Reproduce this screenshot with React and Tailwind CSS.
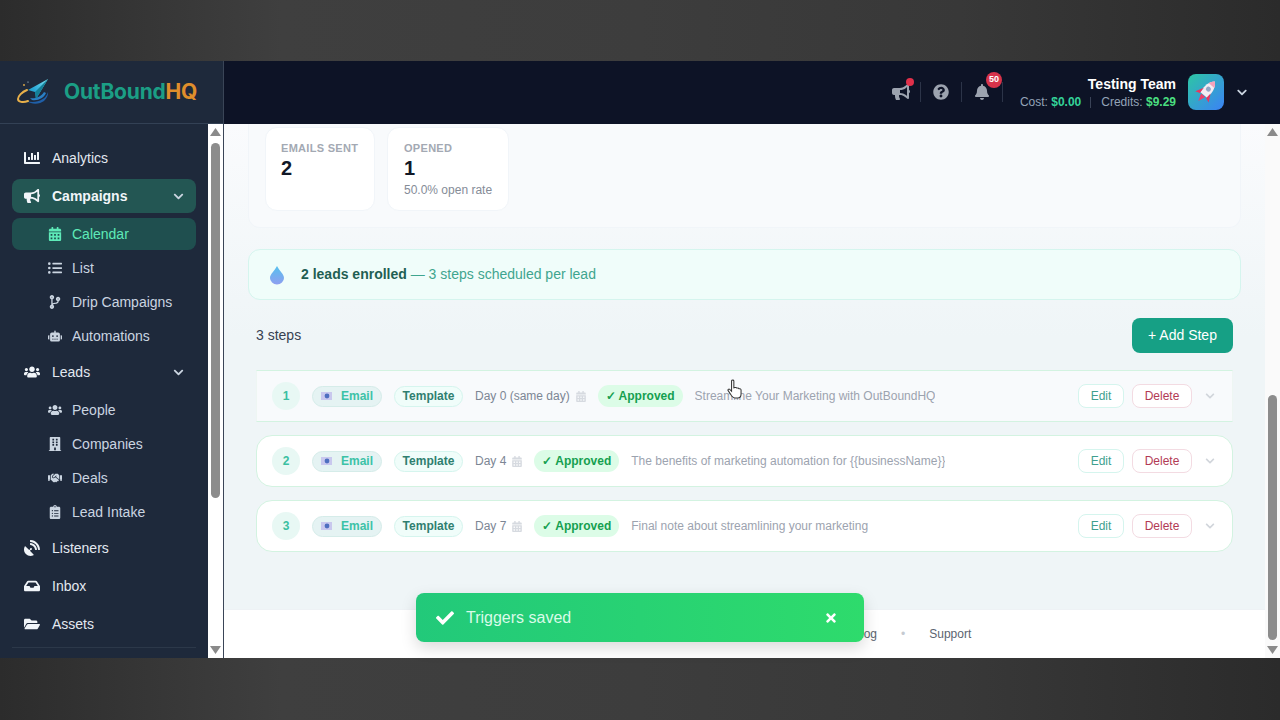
import React from "react";
import {
  FaChartBar, FaBullhorn, FaCalendarAlt, FaListUl, FaCodeBranch, FaRobot, FaUsers, FaBuilding,
  FaHandshake, FaClipboardList, FaSatelliteDish, FaInbox, FaFolderOpen, FaQuestionCircle, FaBell,
  FaCheck, FaTimes, FaChevronDown,
} from "react-icons/fa";

function Main({ icon: Icon, label, active, chevron }) {
  return (
    <div className={`flex h-[34px] items-center rounded-lg pl-3 pr-3 ${active ? "bg-[#235653] font-bold text-[#f1f5f9]" : "text-[#e2e8f0]"}`}>
      <Icon className="h-4 w-4 shrink-0 text-[#f1f5f9]" />
      <span className="ml-3 text-[14px]">{label}</span>
      {chevron && <FaChevronDown className="ml-auto h-[11px] w-[11px] text-[#cbd5e1]" />}
    </div>
  );
}

function Sub({ icon: Icon, label, active }) {
  return (
    <div className={`flex h-[32px] items-center rounded-lg pl-9 ${active ? "bg-[#1f4f4f] text-[#5eeab8]" : "text-[#cbd5e1]"}`}>
      <span className="flex w-[14px] justify-center"><Icon className="h-[14px] w-[14px]" /></span>
      <span className="ml-[10px] text-[14px]">{label}</span>
    </div>
  );
}

function Arrow({ down }) {
  return (
    <svg width="11" height="8" viewBox="0 0 11 8" className="shrink-0">
      <path d={down ? "M0 0h11L5.5 8z" : "M0 8h11L5.5 0z"} fill="#8a8a8a" />
    </svg>
  );
}

function Scrollbar({ before, thumb, bg }) {
  return (
    <div className={`flex w-[15px] shrink-0 flex-col items-center py-1 ${bg}`}>
      <Arrow />
      <div className="shrink-0" style={{ height: before }} />
      <div className="w-[9px] shrink-0 rounded-full bg-[#8c8c8c]" style={{ height: thumb }} />
      <div className="flex-1" />
      <Arrow down />
    </div>
  );
}

function Logo() {
  return (
    <svg width="32" height="26" viewBox="0 0 32 26" className="shrink-0">
      <defs>
        <linearGradient id="plane" x1="1" y1="0" x2="0" y2="1">
          <stop offset="0" stopColor="#7fe3f0" />
          <stop offset="0.6" stopColor="#2aa9d8" />
          <stop offset="1" stopColor="#1c8fa8" />
        </linearGradient>
      </defs>
      <path d="M10 22c8 3 19-1 21-9 .4 3-1 6-4 9-4 3-12 4-17 0z" fill="#1f5fa8" />
      <path d="M13 19c5 1 11-1 14-6l2 1c-2 5-8 8-14 7z" fill="#2a7fc4" />
      <path d="M10 11C5 13 1 17 1 20c0 3 5 4 10 2" fill="none" stroke="#e8b04a" strokeWidth="2" strokeLinecap="round" />
      <path d="M31 0 11 11l7 2 1 7z" fill="url(#plane)" />
      <path d="M31 0 18 13l1 7z" fill="#147f96" />
      <circle cx="7" cy="6" r="0.900" fill="#e8b04a" />
      <circle cx="11" cy="3" r="0.600" fill="#cfe8f5" />
    </svg>
  );
}

function Rocket() {
  return (
    <svg width="30" height="30" viewBox="0 0 24 24">
      <g transform="rotate(40 12 12)">
        <path d="M12 1c3.500 3 4.500 8 3.500 14h-7C7.500 9 8.500 4 12 1z" fill="#f3ecf3" />
        <path d="M12 1c1.400 1.200 2.400 2.600 3 4.200H9C9.600 3.600 10.600 2.200 12 1z" fill="#f4a3bb" />
        <circle cx="12" cy="9" r="2" fill="#93a5c6" />
        <path d="M8.500 10.500 5 17l3.800-1.200zM15.500 10.500 19 17l-3.800-1.200z" fill="#e8365f" />
        <path d="M9.800 15.500h4.400L12 21.500z" fill="#ec3f6a" />
      </g>
    </svg>
  );
}

function Drop() {
  return (
    <svg width="16" height="20" viewBox="0 0 16 20">
      <defs>
        <linearGradient id="dropg" x1="0" y1="0" x2="0" y2="1">
          <stop offset="0" stopColor="#56c0ee" />
          <stop offset="1" stopColor="#8f9ff0" />
        </linearGradient>
      </defs>
      <path d="M8 1c2.500 5 7 8 7 12a7 6.500 0 0 1-14 0C1 9 5.500 6 8 1z" fill="url(#dropg)" />
    </svg>
  );
}

function MailGlyph() {
  return (
    <svg width="12" height="10" viewBox="0 0 12 10" className="shrink-0">
      <rect x="0" y="1" width="11" height="8" fill="#c9c8ee" />
      <circle cx="6" cy="5" r="2.400" fill="#4f6fc0" />
    </svg>
  );
}

function Step({ n, day, subject, hovered }) {
  return (
    <div className={`flex h-[52px] items-center gap-3 pl-[15px] pr-4 ${hovered ? "border-x border-y border-x-[#eef6f3] border-y-[#d3f3e1] bg-[#f8fafc]" : "rounded-2xl border border-[#d3f3e1] bg-white"}`}>
      <div className="flex h-[28px] w-[28px] shrink-0 items-center justify-center rounded-full bg-[#e8f8f4] text-[12px] font-bold text-[#3bbfa1]">{n}</div>
      <div className="flex h-[21px] w-[70px] shrink-0 items-center justify-center gap-[8px] rounded-full border border-[#d5ece9] bg-[#e5f3f3] text-[12px] font-bold text-[#3cc2a7]">
        <MailGlyph />Email
      </div>
      <div className="flex h-[21px] w-[69px] shrink-0 items-center justify-center rounded-full border border-[#d5f5ee] bg-[#f0fdfa] text-[12px] font-bold text-[#2f7f70]">Template</div>
      <div className="flex shrink-0 items-center gap-[6px] text-[12px] text-[#7c8694]">
        {day}<FaCalendarAlt className="h-[11px] w-[10px] text-[#d6dae0]" />
      </div>
      <div className="flex h-[22px] shrink-0 items-center rounded-full bg-[#dcfce7] px-2 text-[12px] font-bold text-[#15a050]">✓ Approved</div>
      <div className="truncate text-[12px] text-[#9ca3af]">{subject}</div>
      <div className="ml-auto flex shrink-0 items-center gap-2">
        <div className="flex h-[24px] w-[46px] items-center justify-center rounded-lg border border-[#d5f5ee] bg-white text-[12px] text-[#3f9f8f]">Edit</div>
        <div className="flex h-[24px] w-[60px] items-center justify-center rounded-lg border border-[#f3dbe2] bg-white text-[12px] text-[#b23a55]">Delete</div>
        <FaChevronDown className="ml-1 h-[10px] w-[12px] text-[#d1d5db]" />
      </div>
    </div>
  );
}

export default function App() {
  const band = "shrink-0 bg-[linear-gradient(90deg,#2c2c2c_0%,#3f3f3f_22%,#3d3d3d_50%,#383838_75%,#2b2b2b_100%)]";
  return (
    <div className="relative flex h-[720px] w-[1280px] flex-col overflow-hidden font-['Liberation_Sans',Arial,sans-serif]">
      <div className={`h-[61px] ${band}`} />
      <div className="flex h-[597px] shrink-0">
        <div className="flex w-[224px] shrink-0 flex-col border-r border-[#3a4557] bg-[#1e293b]">
          <div className="flex h-[63px] shrink-0 items-center gap-[15px] border-b border-[#334155] pl-[17px]">
            <Logo />
            <div className="font-['Inter',sans-serif] text-[21px] font-bold tracking-[-0.2px] text-[#1b9e85]">OutBound<span className="text-[#e08e2b]">HQ</span></div>
          </div>
          <div className="flex min-h-0 flex-1">
            <div className="flex w-[208px] shrink-0 flex-col gap-1 overflow-hidden px-3 pt-[17px]">
              <Main icon={FaChartBar} label="Analytics" />
              <Main icon={FaBullhorn} label="Campaigns" active chevron />
              <div className="-mb-px mt-px flex flex-col gap-[2px]">
                <Sub icon={FaCalendarAlt} label="Calendar" active />
                <Sub icon={FaListUl} label="List" />
                <Sub icon={FaCodeBranch} label="Drip Campaigns" />
                <Sub icon={FaRobot} label="Automations" />
              </div>
              <Main icon={FaUsers} label="Leads" chevron />
              <div className="-mb-px mt-px flex flex-col gap-[2px]">
                <Sub icon={FaUsers} label="People" />
                <Sub icon={FaBuilding} label="Companies" />
                <Sub icon={FaHandshake} label="Deals" />
                <Sub icon={FaClipboardList} label="Lead Intake" />
              </div>
              <Main icon={FaSatelliteDish} label="Listeners" />
              <Main icon={FaInbox} label="Inbox" />
              <Main icon={FaFolderOpen} label="Assets" />
              <div className="mt-[2px] h-px shrink-0 bg-[#2c3849]" />
            </div>
            <Scrollbar before={7} thumb={355} bg="bg-white" />
          </div>
        </div>

        <div className="flex min-w-0 flex-1 flex-col">
          <div className="flex h-[63px] shrink-0 items-center bg-[#0d1326] pb-px pr-[32px]">
            <div className="ml-auto flex items-center">
              <div className="relative flex h-[20px] w-[30px] items-center justify-center border-r border-[#2c3448] pr-[8px]">
                <FaBullhorn className="h-[18px] w-[18px] text-[#9ca3af]" />
                <span className="absolute right-[6px] top-[-4px] h-[8px] w-[8px] rounded-full bg-[#e0304a]" />
              </div>
              <div className="flex h-[20px] w-[41px] items-center justify-center border-r border-[#2c3448]">
                <FaQuestionCircle className="h-4 w-4 text-[#9ca3af]" />
              </div>
              <div className="relative flex h-[20px] w-[41px] items-center justify-center border-r border-[#2c3448]">
                <FaBell className="h-4 w-4 text-[#9ca3af]" />
                <span className="absolute left-[24px] top-[-10px] flex h-[16px] w-[16px] items-center justify-center rounded-full bg-[#d8334a] text-[9px] font-bold text-white">50</span>
              </div>
              <div className="ml-[17px] flex flex-col items-end">
                <div className="text-[14px] font-bold leading-[20px] text-white">Testing Team</div>
                <div className="flex items-center text-[12px] leading-[16px] text-[#94a3b8]">
                  Cost:&nbsp;<span className="font-bold text-[#34d399]">$0.00</span>
                  <span className="ml-[9px] mr-[10px] h-[11px] w-px bg-[#3a4357]" />
                  Credits:&nbsp;<span className="font-bold text-[#4ade80]">$9.29</span>
                </div>
              </div>
              <div className="ml-3 flex h-[36px] w-[36px] items-center justify-center rounded-lg bg-[linear-gradient(135deg,#2dc6a4,#3b82f6)]">
                <Rocket />
              </div>
              <FaChevronDown className="ml-[12px] h-[11px] w-[12px] text-[#cbd5e1]" />
            </div>
          </div>

          <div className="flex min-h-0 flex-1">
            <div className="flex min-w-0 flex-1 flex-col bg-[linear-gradient(180deg,#fafbfd,#eff5f7_40%)]">
              <div className="px-[24px]">
                <div className="flex gap-[12px] rounded-b-xl border-x border-b border-[#f1f5f9] bg-[#f8fafc] pb-4 pl-[16px] pr-4 pt-[3px]">
                  <div className="h-[84px] w-[110px] whitespace-nowrap rounded-xl border border-[#f1f5f9] bg-white px-[15px] pt-[13px]">
                    <div className="text-[11px] font-bold leading-[14px] tracking-[0.3px] text-[#a3a9b3]">EMAILS SENT</div>
                    <div className="text-[20px] font-bold leading-[26px] text-[#111827]">2</div>
                  </div>
                  <div className="h-[84px] w-[122px] whitespace-nowrap rounded-xl border border-[#f1f5f9] bg-white px-[16px] pt-[13px]">
                    <div className="text-[11px] font-bold leading-[14px] tracking-[0.3px] text-[#a3a9b3]">OPENED</div>
                    <div className="text-[20px] font-bold leading-[26px] text-[#111827]">1</div>
                    <div className="text-[12px] leading-[18px] text-[#858c97]">50.0% open rate</div>
                  </div>
                </div>
                <div className="mt-[21px] flex h-[51px] items-center gap-4 rounded-xl border border-[#d5f5ee] bg-[#f0fdfa] pl-[20px]">
                  <Drop />
                  <div className="text-[14px]"><span className="font-bold text-[#1f5f53]">2 leads enrolled</span> <span className="text-[#3fa58f]">— 3 steps scheduled per lead</span></div>
                </div>
                <div className="px-2">
                  <div className="mt-[18px] flex items-center justify-between">
                    <div className="text-[14px] text-[#374151]">3 steps</div>
                    <div className="flex h-[35px] w-[101px] items-center justify-center rounded-lg bg-[#16a085] text-[14px] text-white">+ Add Step</div>
                  </div>
                  <div className="mt-[17px] flex flex-col gap-[13px]">
                    <Step n={1} day="Day 0 (same day)" subject="Streamline Your Marketing with OutBoundHQ" hovered />
                    <Step n={2} day="Day 4" subject="The benefits of marketing automation for {{businessName}}" />
                    <Step n={3} day="Day 7" subject="Final note about streamlining your marketing" />
                  </div>
                </div>
              </div>
              <div className="mt-auto flex h-[49px] shrink-0 items-center border-t border-[#eef2f5] bg-white pl-[629px] text-[12px] text-[#5b6470]">
                <span>Blog</span>
                <span className="mx-[24px] text-[#c5cad1]">•</span>
                <span>Support</span>
              </div>
            </div>
            <Scrollbar before={259} thumb={245} bg="bg-[#fafafa]" />
          </div>
        </div>
      </div>
      <div className={`h-[62px] ${band}`} />

      <div className="absolute bottom-[78px] left-[416px] flex h-[49px] w-[448px] items-center rounded-lg bg-[linear-gradient(90deg,#22c97a,#2edb6c)] pl-[20px] pr-[26px] shadow-[0_6px_16px_rgba(0,0,0,0.15)]">
        <FaCheck className="h-[18px] w-[18px] text-white" />
        <span className="ml-3 text-[16px] text-[#d9fbe8]">Triggers saved</span>
        <FaTimes className="ml-auto h-[14px] w-[14px] text-white" />
      </div>

      <svg width="16" height="21" viewBox="0 0 14 18" className="absolute left-[727px] top-[379px]">
        <path d="M4 1.500c0-1 2-1 2 0v6l1-.2c1-.2 1.500.1 1.700.5 1-.3 1.600 0 1.800.5 1-.2 1.800.3 1.800 1.200v3.500c0 2-1 3.500-3 3.500H7c-1.500 0-2-1-3-2L1 10c-.6-.9.6-1.900 1.500-1L4 10.500z" fill="#fff" stroke="#333" strokeWidth="0.900" />
      </svg>
    </div>
  );
}
